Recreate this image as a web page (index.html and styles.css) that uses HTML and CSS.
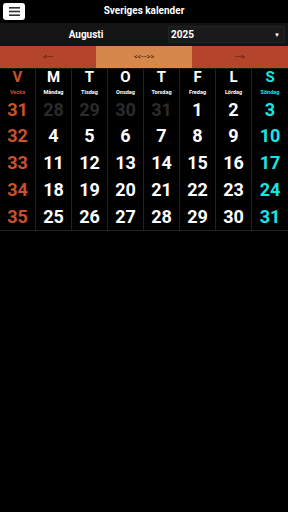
FILE: index.html
```html
<!DOCTYPE html>
<html lang="sv">
<head>
    <meta charset="UTF-8">
    <meta name="viewport" content="width=device-width, initial-scale=1.0">
    <title>Sveriges kalender</title>
    <link rel="stylesheet" href="styles.css">
</head>
<body>
    <div class="topbar">
        <button class="menu-btn">
            <svg width="11" height="9" viewBox="0 0 11 9">
                <rect x="0" y="0" width="11" height="1.6" fill="#333"/>
                <rect x="0" y="3.7" width="11" height="1.6" fill="#333"/>
                <rect x="0" y="7.4" width="11" height="1.6" fill="#333"/>
            </svg>
        </button>
        <div class="title">Sveriges kalender</div>
        <div></div>
    </div>

    <div class="month-row">
        <div class="month">Augusti</div>
        <div class="year-select">
            <span>2025</span>
            <span class="arrow">▼</span>
        </div>
    </div>

    <div class="nav-row">
        <button class="nav-btn">&lt;---</button>
        <button class="nav-btn nav-mid">&lt;&lt;---&gt;&gt;</button>
        <button class="nav-btn">---&gt;</button>
    </div>

    <div class="calendar" id="calendar"></div>

    <script>
        const heads = [
            ['V', 'Vecka', 'week'],
            ['M', 'Måndag', ''],
            ['T', 'Tisdag', ''],
            ['O', 'Onsdag', ''],
            ['T', 'Torsdag', ''],
            ['F', 'Fredag', ''],
            ['L', 'Lördag', ''],
            ['S', 'Söndag', 'sun']
        ];
        const weeks = [
            [31, [[28, 'other'], [29, 'other'], [30, 'other'], [31, 'other'], [1], [2], [3]]],
            [32, [[4], [5], [6], [7], [8], [9], [10]]],
            [33, [[11], [12], [13], [14], [15], [16], [17]]],
            [34, [[18], [19], [20], [21], [22], [23], [24]]],
            [35, [[25], [26], [27], [28], [29], [30], [31]]]
        ];

        const cal = document.getElementById('calendar');
        let html = '';
        heads.forEach(h => {
            html += `<div class="cell head ${h[2]}"><div class="letter">${h[0]}</div><div class="dayname">${h[1]}</div></div>`;
        });
        weeks.forEach(w => {
            html += `<div class="cell date week">${w[0]}</div>`;
            w[1].forEach((d, i) => {
                let cls = d[1] || '';
                if (i === 6 && !cls) cls = 'sun';
                html += `<div class="cell date ${cls}">${d[0]}</div>`;
            });
        });
        cal.innerHTML = html;
    </script>
</body>
</html>
```

FILE: styles.css
```css
* {
    margin: 0;
    padding: 0;
    box-sizing: border-box;
}

body {
    font-family: 'Roboto', 'Liberation Sans', sans-serif;
    background: #000;
    color: #fff;
    width: 288px;
    min-height: 512px;
}

.topbar {
    height: 23px;
    display: grid;
    grid-template-columns: 30px 1fr 30px;
    align-items: center;
    background: #000;
}

.menu-btn {
    margin-left: 3px;
    width: 22px;
    height: 17px;
    background: #fff;
    border: none;
    border-radius: 3px;
    display: flex;
    align-items: center;
    justify-content: center;
}

.title {
    text-align: center;
    font-size: 10px;
    font-weight: bold;
    padding-bottom: 2px;
}

.month-row {
    height: 23px;
    background: #141414;
    display: flex;
    align-items: center;
}

.month {
    width: 168px;
    text-align: center;
    font-size: 10px;
    font-weight: bold;
    padding-left: 4px;
}

.year-select {
    width: 117px;
    height: 17px;
    background: #1a1a1a;
    border: 1px solid #222;
    border-radius: 2px;
    display: flex;
    align-items: center;
    justify-content: space-between;
    padding: 0 4px 0 2px;
    font-size: 10px;
    font-weight: bold;
}

.arrow {
    font-size: 6px;
}

.nav-row {
    display: flex;
    height: 23px;
    border-bottom: 1px solid #1a1a1a;
}

.nav-btn {
    flex: 1;
    border: none;
    background: #b4452a;
    color: #3c1307;
    font-family: 'Roboto', 'Liberation Sans', sans-serif;
    font-size: 7px;
}

.nav-mid {
    background: #d6874c;
}

.calendar {
    display: grid;
    grid-template-columns: repeat(8, 36px);
    grid-auto-rows: 26.8px;
    border-bottom: 1px solid #222;
}

.cell {
    border-right: 1px solid #222;
    display: flex;
    flex-direction: column;
    align-items: center;
    justify-content: center;
}

.cell:nth-child(8n) {
    border-right: none;
}

.letter {
    font-size: 15px;
    font-weight: bold;
    line-height: 15px;
}

.dayname {
    font-size: 5.5px;
    font-weight: bold;
    margin-top: 4px;
    line-height: 6px;
}

.date {
    font-size: 18px;
    font-weight: bold;
}

.week {
    color: #c8522c;
}

.sun {
    color: #18e6e6;
}

.other {
    color: #2b2b2b;
}
```
